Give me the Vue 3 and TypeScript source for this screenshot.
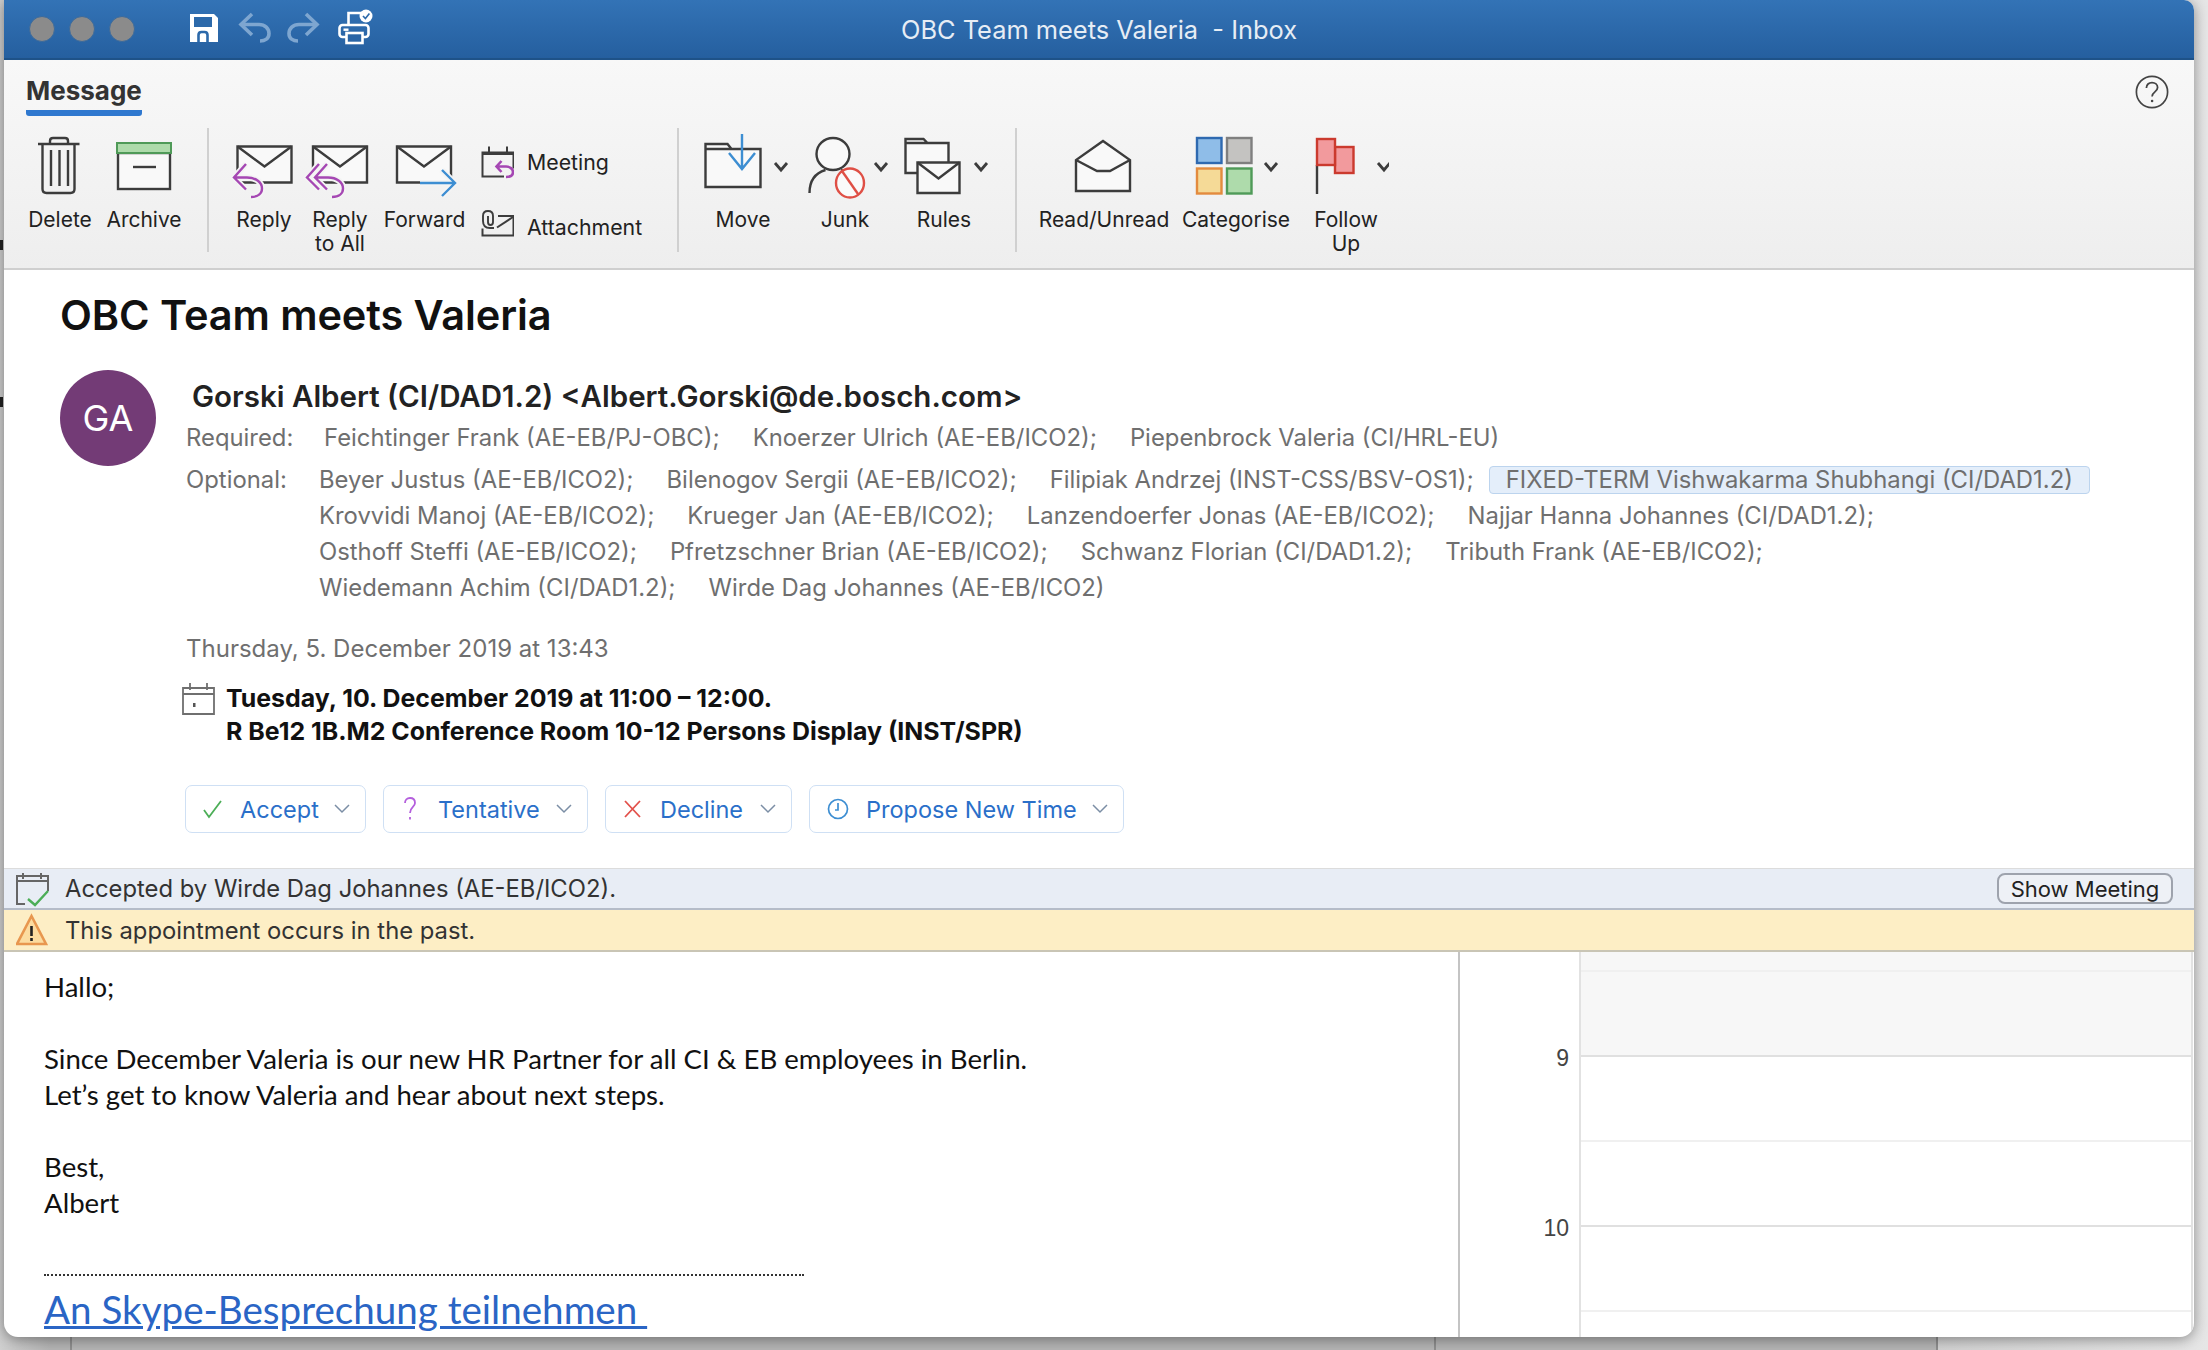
<template>
  <div class="desk">
    <i class="desk-line line-a"></i>
    <i class="desk-line line-b"></i>
    <i class="desk-line line-c"></i>
    <i class="desk-mark mark-a"></i>
    <i class="desk-mark mark-b"></i>
    <div class="window">
      <header class="title-bar">
        <div class="lights"><span></span><span></span><span></span></div>
        <svg class="quick" viewBox="186 6 190 42" width="190" height="42">
          <path d="M190 14h24l4 4v24h-28z" fill="#fff" />
          <path d="M194 17h18v10h-18z" fill="#2c69aa" />
          <path d="M198.500 42v-7c0-2 1-3 3-3h3c2 0 3 1 3 3v7" fill="none" stroke="#2c69aa" stroke-width="2.600" />
          <g fill="none" stroke="#7ea6d0" stroke-width="3.600">
            <path d="M252 14l-11 10.500 11 10.500" />
            <path d="M241 24.500h18c6 0 10 4 10 9 0 5-4 7.500-9 7.500" />
            <path d="M306 14l11 10.500-11 10.500" />
            <path d="M317 24.500h-18c-6 0-10 4-10 9 0 5 4 7.500 9 7.500" />
          </g>
          <g fill="none" stroke="#fff" stroke-width="2.600">
            <path d="M348.500 25v-12h15" />
            <rect x="339.500" y="25" width="29" height="12" rx="3" />
            <rect x="346.500" y="33" width="16" height="10" fill="#2a65a6" />
          </g>
          <rect x="343.500" y="28.500" width="5" height="2.400" fill="#fff" />
          <circle cx="366" cy="16" r="6.500" fill="#fff" />
          <path d="M363 16l2.400 2.600 4-5" fill="none" stroke="#2c69aa" stroke-width="1.600" />
        </svg>
        <div class="title-text">OBC Team meets Valeria &nbsp;- Inbox</div>
      </header>

      <section class="ribbon">
        <div class="tab-row">
          <div class="tab">Message</div>
          <svg class="help" viewBox="0 0 34 34" width="34" height="34">
            <circle cx="17" cy="17" r="15.600" fill="none" stroke="#444" stroke-width="1.700" />
            <path d="M11.400 13c0-3.400 2.500-5.400 5.600-5.400s5.600 2 5.600 5c0 4.400-5.500 4.200-5.500 8.800" fill="none" stroke="#444" stroke-width="1.800" />
            <circle cx="17.100" cy="26" r="1.300" fill="#444" />
          </svg>
        </div>
        <div class="tools">
          <div class="tool w-84">
            <svg viewBox="18 128 84 80" width="84" height="80">
              <path d="M38 144h41.500M50 144v-3c0-2 1-3 3-3h12c2 0 3 1 3 3v3M42.500 144v45c0 3 1 4 4 4h24c3 0 4-1 4-4v-45M51 150v36M59.500 150v36M68 150v36" class="ink" />
            </svg>
            <span>Delete</span>
          </div>
          <div class="tool w-84">
            <svg viewBox="102 128 84 80" width="84" height="80">
              <rect x="118" y="153" width="52" height="36" class="ink paper" />
              <rect x="117" y="143" width="54" height="10" fill="#aedbab" stroke="#4f9a58" stroke-width="2" />
              <path d="M133 167h23" class="ink" />
            </svg>
            <span>Archive</span>
          </div>
          <i class="sep sep-a"></i>
          <div class="tool w-76">
            <svg viewBox="226 128 76 80" width="76" height="80">
              <path d="M237.500 146.500h54v36h-54z" class="ink paper" />
              <path d="M237.500 146.500l27 20 27-20" class="ink" />
              <path d="M246 164l-12 13.500 12 12M234 177.500h13c9 0 15 5 15 11 0 5-4 8.500-11 8.500" class="halo" />
              <path d="M246 164l-12 13.500 12 12M234 177.500h13c9 0 15 5 15 11 0 5-4 8.500-11 8.500" class="purple" />
            </svg>
            <span>Reply</span>
          </div>
          <div class="tool w-76">
            <svg viewBox="302 128 76 80" width="76" height="80">
              <path d="M313 146.500h54v36h-54z" class="ink paper" />
              <path d="M313 146.500l27 20 27-20" class="ink" />
              <path d="M327 164l-12 13.500 12 12M319 164l-12 13.500 12 12M315 177.500h13c9 0 15 5 15 11 0 5-4 8.500-11 8.500" class="halo" />
              <path d="M327 164l-12 13.500 12 12M319 164l-12 13.500 12 12M315 177.500h13c9 0 15 5 15 11 0 5-4 8.500-11 8.500" class="purple" />
            </svg>
            <span>Reply<br />to All</span>
          </div>
          <div class="tool w-93">
            <svg viewBox="378 128 93 80" width="93" height="80">
              <path d="M397 146.500h54v36h-54z" class="ink paper" />
              <path d="M397 146.500l27 20 27-20" class="ink" />
              <path d="M420 183h34M442 170l13 13-13 13" class="halo" />
              <path d="M420 183h34M442 170l13 13-13 13" class="blue" />
            </svg>
            <span>Forward</span>
          </div>
          <div class="small-tools">
            <div class="small-tool one">
              <svg viewBox="480 146 34 34" width="34" height="34">
                <path d="M504 176.500h-21.500v-24h31v16M482.500 154h31M489 146.500v6M507 146.500v6" class="ink thin" />
                <path d="M501.500 161l-5 5.500 5 5.500M497 166.500h9c4 0 7 2.500 7 5.500 0 3-2.500 5-7 5" class="purple thick" />
              </svg>
              <span>Meeting</span>
            </div>
            <div class="small-tool two">
              <svg viewBox="480 208 34 30" width="34" height="30">
                <path d="M498 215h15.500v19.500h-31v-7" class="ink thin" />
                <path d="M497 226.500l16-10.500" class="ink thin" />
                <path d="M494 227h-4c-5 0-7-3-7-7v-5c0-3 2-5 5-5s5 2 5 5v6c0 2-1 3-2.500 3s-2.500-1-2.500-3v-6" fill="none" stroke="#3d3d3d" stroke-width="1.900" />
              </svg>
              <span>Attachment</span>
            </div>
          </div>
          <i class="sep sep-b"></i>
          <div class="tool w-100">
            <svg viewBox="693 128 100 80" width="100" height="80">
              <path d="M705.500 149h55v38h-55zM705.500 149v-5h22l4 5" class="ink paper" />
              <path d="M742 134v35M729 153l13 16 13-16" class="blue" />
              <path d="M775 163l6 7 6-7" class="chev" />
            </svg>
            <span>Move</span>
          </div>
          <div class="tool w-104">
            <svg viewBox="793 128 104 80" width="104" height="80">
              <ellipse cx="833" cy="154" rx="16.500" ry="16" class="ink paper" />
              <path d="M809.500 193c0-12 6-20 16-23M841 170c4 1 7 3 10 6" class="ink" />
              <ellipse cx="850" cy="183" rx="14" ry="14.500" fill="#fafafa" stroke="#df4f45" stroke-width="2.400" />
              <path d="M842 171l16 23" fill="none" stroke="#df4f45" stroke-width="2.400" />
              <path d="M875 163l6 7 6-7" class="chev" />
            </svg>
            <span>Junk</span>
          </div>
          <div class="tool w-94">
            <svg viewBox="897 128 94 80" width="94" height="80">
              <path d="M905.500 173v-30h43v30zM905.500 143v-4h18l4 4" class="ink paper" />
              <path d="M917.500 162.500h42v30.500h-42z" class="ink paper" />
              <path d="M917.500 162.500l21 16 21-16" class="ink" />
              <path d="M975 163l6 7 6-7" class="chev" />
            </svg>
            <span>Rules</span>
          </div>
          <i class="sep sep-c"></i>
          <div class="tool w-130">
            <svg viewBox="1039 128 130 80" width="130" height="80">
              <path d="M1076 191v-31l27-19 27 19v31z" class="ink paper" />
              <path d="M1076 160l21 11h13l20-11" class="ink" />
            </svg>
            <span>Read/Unread</span>
          </div>
          <div class="tool w-134">
            <svg viewBox="1169 128 134 80" width="134" height="80">
              <rect x="1197" y="138" width="24.500" height="25" fill="#8fbde8" stroke="#2e69b0" stroke-width="2.400" />
              <rect x="1227" y="138" width="24.500" height="25" fill="#c4c3c1" stroke="#7f7f7f" stroke-width="2.400" />
              <rect x="1197" y="168.500" width="24.500" height="25" fill="#f5da97" stroke="#e38b3e" stroke-width="2.400" />
              <rect x="1227" y="168.500" width="24.500" height="25" fill="#aedbab" stroke="#4f9a58" stroke-width="2.400" />
              <path d="M1265 163l6 7 6-7" class="chev" />
            </svg>
            <span>Categorise</span>
          </div>
          <div class="tool w-86">
            <svg viewBox="1303 128 86 80" width="86" height="80">
              <path d="M1317 165v29" class="ink" />
              <rect x="1335" y="147" width="18.500" height="26" fill="#f29a9d" stroke="#cb3a2e" stroke-width="2.400" />
              <rect x="1317" y="139" width="18" height="26" fill="#f29a9d" stroke="#cb3a2e" stroke-width="2.400" />
              <path d="M1378 163l6 7 6-7" class="chev" />
            </svg>
            <span>Follow<br />Up</span>
          </div>
        </div>
      </section>

      <section class="head">
        <h1 class="subject">OBC Team meets Valeria</h1>
        <div class="people">
          <div class="avatar">GA</div>
          <div class="details">
            <div class="sender">Gorski Albert (CI/DAD1.2) &lt;Albert.Gorski@de.bosch.com&gt;</div>
            <div class="who required">
              <div class="who-label">Required:</div>
              <div class="who-row"><span v-for="n in required" :key="n">{{ n }}</span></div>
            </div>
            <div class="who optional">
              <div class="who-label">Optional:</div>
              <div class="who-rows">
                <div v-for="(row, i) in optional" :key="i" class="who-row">
                  <span v-for="n in row" :key="n" :class="{ chip: n.startsWith('FIXED') }">{{ n }}</span>
                </div>
              </div>
            </div>
            <div class="sent">Thursday, 5. December 2019 at 13:43</div>
            <div class="when">
              <svg viewBox="0 0 33 33" width="33" height="33">
                <path d="M1 6h31v26H1zM1 12h31M8 1v7M25 1v7" fill="none" stroke="#6f6f6f" stroke-width="1.800" />
                <rect x="11" y="21" width="2.500" height="4" fill="#555" />
              </svg>
              <div>Tuesday, 10. December 2019 at 11:00 – 12:00.<br />R Be12 1B.M2 Conference Room 10-12 Persons Display (INST/SPR)</div>
            </div>
            <div class="answers">
              <button class="answer b-accept">
                <svg viewBox="0 0 20 20" width="20" height="20"><path d="M1 11l5 7L18 2" fill="none" stroke="#4cae57" stroke-width="1.800" /></svg>
                <span>Accept</span>
                <svg class="down" viewBox="0 0 16 10" width="16" height="10"><path d="M1 1l7 7 7-7" /></svg>
              </button>
              <button class="answer b-tentative">
                <svg viewBox="0 0 20 24" width="20" height="24"><path d="M4 6c0-3 2-5 5-5s5 2 5 5c0 4-5 4-5 10M9 20v2.500" fill="none" stroke="#b45fdd" stroke-width="1.800" /></svg>
                <span>Tentative</span>
                <svg class="down" viewBox="0 0 16 10" width="16" height="10"><path d="M1 1l7 7 7-7" /></svg>
              </button>
              <button class="answer b-decline">
                <svg viewBox="0 0 20 20" width="20" height="20"><path d="M2 2l15 16M17 2L2 18" fill="none" stroke="#e2504a" stroke-width="1.800" /></svg>
                <span>Decline</span>
                <svg class="down" viewBox="0 0 16 10" width="16" height="10"><path d="M1 1l7 7 7-7" /></svg>
              </button>
              <button class="answer b-propose">
                <svg viewBox="0 0 22 22" width="22" height="22"><circle cx="11" cy="11" r="9.500" fill="none" stroke="#3d8ed2" stroke-width="1.700" /><path d="M11 5v7h-3" fill="none" stroke="#3d8ed2" stroke-width="1.700" /></svg>
                <span>Propose New Time</span>
                <svg class="down" viewBox="0 0 16 10" width="16" height="10"><path d="M1 1l7 7 7-7" /></svg>
              </button>
            </div>
          </div>
        </div>
      </section>

      <div class="notice accepted">
        <svg viewBox="0 0 36 36" width="36" height="36">
          <path d="M9 33H1V5h31v15M1 10h31M7 2v6M25 2v6" fill="none" stroke="#666" stroke-width="2" />
          <path d="M12 28l7 6 13-14" fill="none" stroke="#4cae57" stroke-width="2.400" />
        </svg>
        <span>Accepted by Wirde Dag Johannes (AE-EB/ICO2).</span>
        <button class="show">Show Meeting</button>
      </div>
      <div class="notice warning">
        <svg viewBox="0 0 36 34" width="36" height="34">
          <path d="M15.500 3L30 31H1z" fill="#fcdca0" stroke="#e8974f" stroke-width="2.600" />
          <path d="M15.500 13v10M15.500 25v3" fill="none" stroke="#222" stroke-width="2.600" />
        </svg>
        <span>This appointment occurs in the past.</span>
      </div>

      <section class="bottom">
        <div class="mail">
          <p>Hallo;</p>
          <p>&nbsp;</p>
          <p>Since December Valeria is our new HR Partner for all CI &amp; EB employees in Berlin.</p>
          <p>Let’s get to know Valeria and hear about next steps.</p>
          <p>&nbsp;</p>
          <p>Best,</p>
          <p>Albert</p>
          <p>&nbsp;</p>
          <div class="dots"></div>
          <a class="skype" href="#">An Skype-Besprechung teilnehmen&nbsp;</a>
        </div>
        <div class="hours">
          <div class="hour">9</div>
          <div class="hour">10</div>
        </div>
        <div class="grid">
          <div class="slot off short"></div>
          <div class="slot off strong"></div>
          <div class="slot"></div>
          <div class="slot strong"></div>
          <div class="slot"></div>
          <div class="slot"></div>
        </div>
      </section>
    </div>
  </div>
</template>

<script setup lang="ts">
const required: string[] = [
  'Feichtinger Frank (AE-EB/PJ-OBC);',
  'Knoerzer Ulrich (AE-EB/ICO2);',
  'Piepenbrock Valeria (CI/HRL-EU)',
];

const optional: string[][] = [
  ['Beyer Justus (AE-EB/ICO2);', 'Bilenogov Sergii (AE-EB/ICO2);', 'Filipiak Andrzej (INST-CSS/BSV-OS1);', 'FIXED-TERM Vishwakarma Shubhangi (CI/DAD1.2)'],
  ['Krovvidi Manoj (AE-EB/ICO2);', 'Krueger Jan (AE-EB/ICO2);', 'Lanzendoerfer Jonas (AE-EB/ICO2);', 'Najjar Hanna Johannes (CI/DAD1.2);'],
  ['Osthoff Steffi (AE-EB/ICO2);', 'Pfretzschner Brian (AE-EB/ICO2);', 'Schwanz Florian (CI/DAD1.2);', 'Tributh Frank (AE-EB/ICO2);'],
  ['Wiedemann Achim (CI/DAD1.2);', 'Wirde Dag Johannes (AE-EB/ICO2)'],
];
</script>

<style>
html,
body {
  margin: 0;
  background: #b4b4b4;
}
</style>

<style scoped>
.desk {
  position: relative;
  width: 2208px;
  height: 1350px;
  overflow: hidden;
  padding-left: 4px;
  box-sizing: border-box;
  background: linear-gradient(90deg, #cfcfcf 0, #b4b4b4 50px, #b4b4b4 1936px, #d2d2d2 1937px, #e6e6e6 2208px);
  font-family: Inter, 'Liberation Sans', sans-serif;
  color: #222;
}

.desk-line {
  position: absolute;
  top: 1330px;
  width: 2px;
  height: 20px;
  background: #8e8e8e;
}

.line-a { left: 70px; }
.line-b { left: 1434px; }
.line-c { left: 1936px; }

.desk-mark {
  position: absolute;
  left: 0;
  width: 3px;
  height: 10px;
  background: #222;
}

.mark-a { top: 240px; }
.mark-b { top: 397px; }

.window {
  position: relative;
  width: 2190px;
  height: 1337px;
  background: #fff;
  border-radius: 0 10px 14px 14px;
  overflow: hidden;
  box-shadow: 0 2px 14px rgba(0, 0, 0, 0.4);
  display: flex;
  flex-direction: column;
}

.title-bar {
  position: relative;
  height: 60px;
  flex: none;
  box-sizing: border-box;
  display: flex;
  align-items: center;
  background: linear-gradient(#3373b6, #255f9f);
  border-bottom: 2px solid #1e5288;
}

.lights {
  display: flex;
  gap: 14px;
  margin-left: 25px;
}

.lights span {
  width: 26px;
  height: 26px;
  box-sizing: border-box;
  border-radius: 50%;
  background: #8b8b8b;
  border: 1px solid #3b6a9c;
}

.quick {
  margin-left: 51px;
  margin-top: -4px;
}

.title-text {
  position: absolute;
  left: 897px;
  top: 15px;
  font-size: 25.400px;
  line-height: 30px;
  color: #e6edf5;
  white-space: nowrap;
}

.ribbon {
  height: 210px;
  flex: none;
  box-sizing: border-box;
  background: linear-gradient(#f8f8f8, #eeeeee);
  border-bottom: 2px solid #cfcfcf;
}

.tab-row {
  height: 68px;
  padding: 0 25px 0 22px;
  display: flex;
  justify-content: space-between;
  align-items: flex-start;
}

.tab {
  margin-top: 15px;
  font-size: 26px;
  font-weight: 700;
  line-height: 32px;
  color: #333;
  height: 35px;
  width: 116px;
  white-space: nowrap;
  border-bottom: 6px solid #2f78cf;
  border-radius: 0 0 3px 3px;
  box-sizing: content-box;
}

.help {
  margin-top: 15px;
}

.tools {
  display: flex;
  align-items: flex-start;
  padding-left: 14px;
}

.tool {
  display: flex;
  flex-direction: column;
  align-items: center;
  font-size: 21px;
  line-height: 24px;
  color: #222;
  text-align: center;
  white-space: nowrap;
}

.tool svg {
  display: block;
}

.w-76 { width: 76px; }
.w-84 { width: 84px; }
.w-86 { width: 86px; }
.w-93 { width: 93px; }
.w-94 { width: 94px; }
.w-100 { width: 100px; }
.w-104 { width: 104px; }
.w-130 { width: 130px; }
.w-134 { width: 134px; }

.sep {
  width: 2px;
  height: 124px;
  background: #d0d0d0;
}

.sep-a { margin: 0 17px 0 21px; }
.sep-b { margin: 0 14px 0 4px; }
.sep-c { margin: 0 22px 0 24px; }

.small-tools {
  width: 193px;
  margin-left: 9px;
  display: flex;
  flex-direction: column;
}

.small-tool {
  display: flex;
  align-items: center;
  gap: 13px;
  font-size: 21.300px;
  white-space: nowrap;
}

.small-tool.one {
  margin-top: 18px;
}

.small-tool.one span {
  padding-bottom: 2px;
}

.small-tool.two {
  margin-top: 28px;
}

.small-tool.two span {
  padding-top: 6px;
}

.ink {
  fill: none;
  stroke: #3c3c3c;
  stroke-width: 2.4;
}

.ink.thin {
  stroke-width: 2;
}

.ink.paper {
  fill: #f9f9f9;
}

.purple {
  fill: none;
  stroke: #a547b3;
  stroke-width: 2.4;
}

.purple.thick {
  stroke-width: 2.6;
}

.blue {
  fill: none;
  stroke: #3d8ed2;
  stroke-width: 2.4;
}

.halo {
  fill: none;
  stroke: #f4f4f4;
  stroke-width: 6;
}

.chev {
  fill: none;
  stroke: #3c3c3c;
  stroke-width: 2.8;
}

.head {
  height: 598px;
  flex: none;
  padding-left: 56px;
  box-sizing: border-box;
}

.subject {
  margin: 15px 0 0;
  font-size: 41.500px;
  line-height: 60px;
  font-weight: 600;
  color: #111;
  letter-spacing: -0.1px;
}

.people {
  margin-top: 25px;
  display: flex;
  gap: 30px;
}

.avatar {
  width: 96px;
  height: 96px;
  flex: none;
  border-radius: 50%;
  background: #733b76;
  color: #fff;
  font-size: 36px;
  line-height: 96px;
  text-align: center;
}

.details {
  padding-top: 8px;
  flex: 1;
  min-width: 0;
}

.sender {
  margin-left: 6px;
  font-size: 29.500px;
  line-height: 36px;
  font-weight: 600;
  color: #222;
}

.who {
  display: flex;
  font-size: 23.850px;
  line-height: 36px;
  color: #6f6f6f;
  white-space: nowrap;
}

.required {
  margin-top: 6px;
}

.optional {
  margin-top: 6px;
}

.required .who-label {
  width: 138px;
}

.optional .who-label {
  width: 133px;
}

.who-row {
  display: flex;
  gap: 33px;
  height: 36px;
  align-items: center;
}

.chip {
  margin-left: -18px;
  padding: 0 16px;
  height: 26px;
  line-height: 26px;
  background: #e4eefa;
  border: 1px solid #bcd4ee;
  border-radius: 4px;
}

.sent {
  margin-top: 25px;
  font-size: 24px;
  line-height: 36px;
  color: #6f6f6f;
}

.when {
  margin-top: 15px;
  margin-left: -4px;
  display: flex;
  gap: 11px;
  font-size: 24.900px;
  font-weight: 700;
  line-height: 33px;
  color: #111;
}

.answers {
  margin-top: 37px;
  margin-left: -1px;
  display: flex;
  gap: 17px;
}

.answer {
  height: 48px;
  box-sizing: border-box;
  padding: 0;
  display: flex;
  align-items: center;
  background: #fff;
  border: 1.5px solid #cfe0f4;
  border-radius: 7px;
  font: inherit;
  font-size: 23.500px;
  color: #2a6fc9;
}

.answer svg:first-child {
  margin-left: 17px;
}

.answer span {
  margin-left: 17px;
  white-space: nowrap;
}

.answer .down {
  margin-left: auto;
  margin-right: 15px;
  fill: none;
  stroke: #7b8ea5;
  stroke-width: 1.5;
}

.b-accept { width: 181px; }
.b-tentative { width: 205px; }
.b-decline { width: 187px; }
.b-propose { width: 315px; }

.notice {
  flex: none;
  display: flex;
  align-items: center;
  box-sizing: border-box;
  padding-left: 12px;
  font-size: 23.800px;
  color: #333;
}

.notice span {
  margin-left: 13px;
}

.accepted {
  height: 42px;
  background: #e8edf5;
  border-top: 1px solid #dcdcdc;
  border-bottom: 2px solid #b5bcc8;
}

.warning {
  height: 42px;
  background: #fdeec5;
  border-bottom: 2px solid #c9c5b5;
}

.show {
  margin-left: auto;
  margin-right: 21px;
  width: 176px;
  height: 31px;
  padding: 0;
  box-sizing: border-box;
  background: #eef1f6;
  border: 2px solid #9ea3ad;
  border-radius: 8px;
  font: inherit;
  font-size: 22px;
  color: #222;
}

.bottom {
  flex: 1;
  min-height: 0;
  display: flex;
}

.mail {
  width: 1456px;
  flex: none;
  box-sizing: border-box;
  padding: 17px 0 0 40px;
  border-right: 2px solid #c4c4c4;
  font-family: Lato, 'Liberation Sans', sans-serif;
  font-size: 27.600px;
  line-height: 36px;
  color: #111;
  overflow: hidden;
}

.mail p {
  margin: 0;
}

.dots {
  margin-top: 17px;
  width: 760px;
  border-top: 2px dotted #333;
}

.skype {
  display: block;
  margin-top: 8px;
  font-size: 38.600px;
  line-height: 50px;
  color: #2a65c5;
  white-space: nowrap;
}

.hours {
  width: 121px;
  flex: none;
  box-sizing: border-box;
  border-right: 2px solid #e2e2e2;
  padding: 90px 10px 0 0;
  text-align: right;
  font-size: 23px;
  font-family: 'Liberation Sans', sans-serif;
  color: #444;
}

.hour {
  height: 170px;
  line-height: 32px;
}

.grid {
  flex: 1;
  min-width: 0;
  margin-right: 1px;
  border-right: 2px solid #e2e2e2;
}

.slot {
  height: 85px;
  box-sizing: border-box;
  border-bottom: 2px solid #f0f0f0;
}

.slot.short {
  height: 20px;
}

.off {
  background: #f7f7f7;
}

.strong {
  border-bottom-color: #e0e0e0;
}
</style>
